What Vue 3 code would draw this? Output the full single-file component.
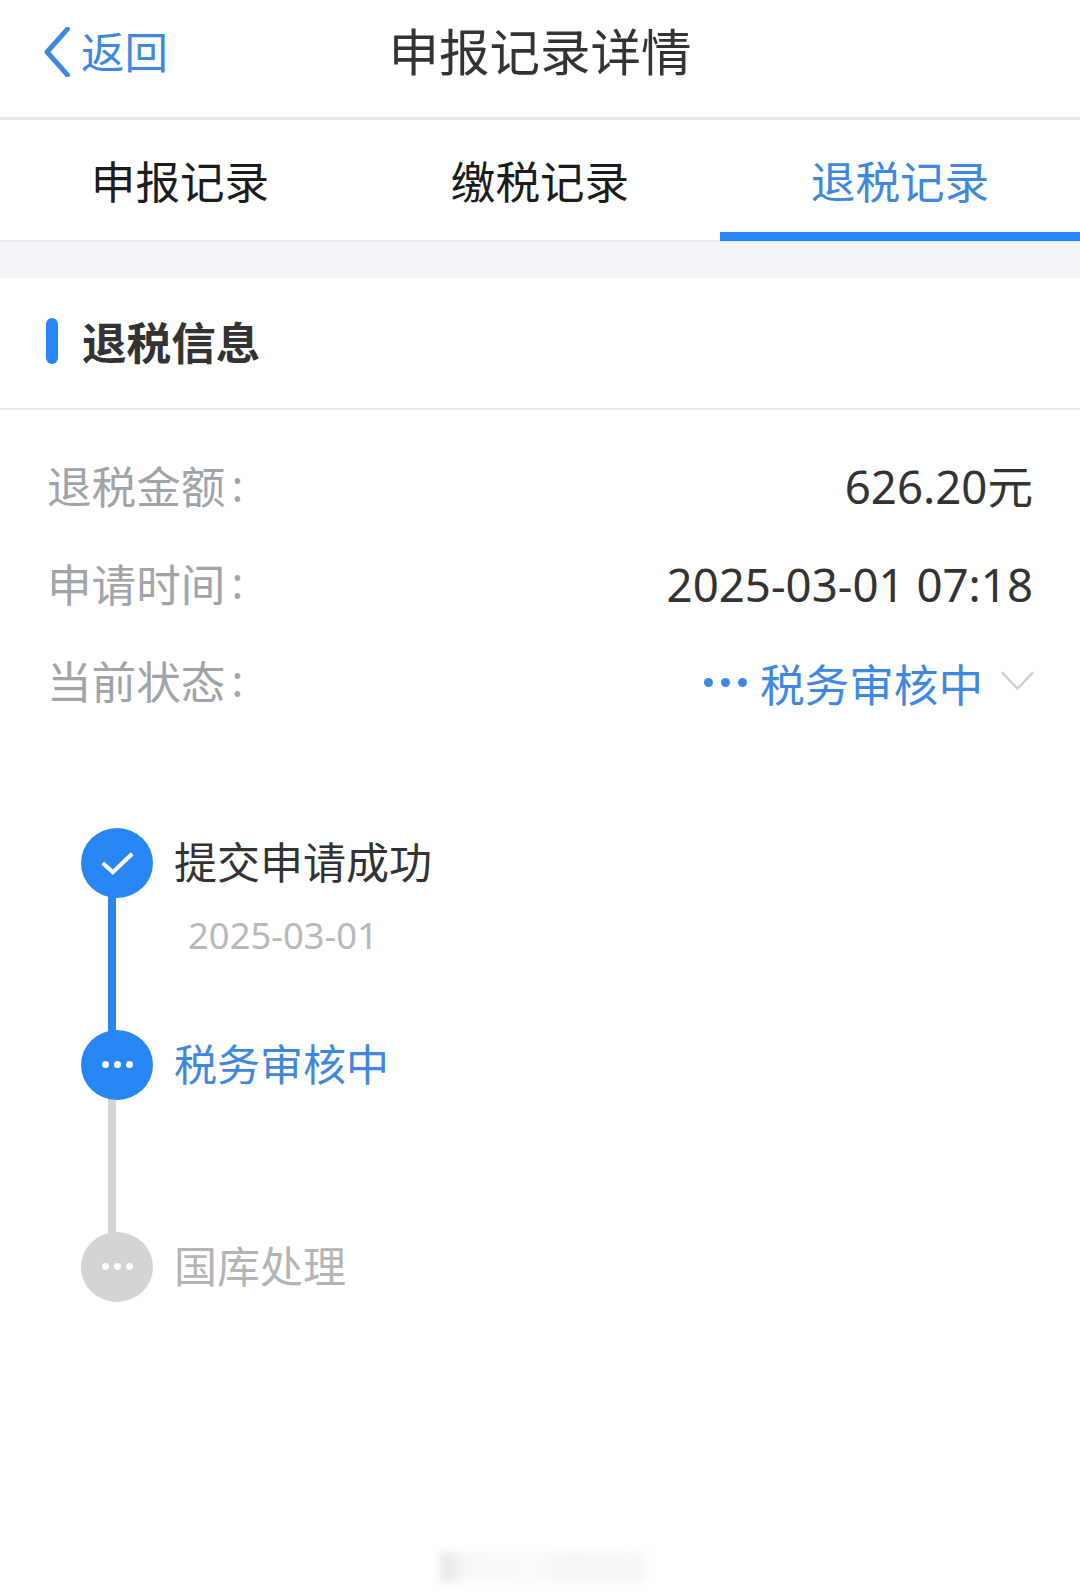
<script setup>
const tabs = [
  { label: '申报记录', active: false },
  { label: '缴税记录', active: false },
  { label: '退税记录', active: true },
]
const rows = [
  { label: '退税金额', value: '626.20元' },
  { label: '申请时间', value: '2025-03-01 07:18' },
]
</script>

<template>
  <div class="page">
    <header class="nav">
      <div class="back">
        <svg class="chevron" viewBox="0 0 26 48" fill="none">
          <path d="M23 2 L3.5 24 L23 46" stroke="#3f88e2" stroke-width="4.8" stroke-linecap="round" stroke-linejoin="round" />
        </svg>
        <span>返回</span>
      </div>
      <h1 class="title">申报记录详情</h1>
    </header>

    <nav class="tabs">
      <div v-for="t in tabs" :key="t.label" class="tab" :class="{ active: t.active }">{{ t.label }}</div>
    </nav>

    <div class="band"></div>

    <section class="section-head">
      <i class="marker"></i>
      <h2>退税信息</h2>
    </section>

    <section class="info">
      <div v-for="r in rows" :key="r.label" class="row">
        <span class="label">{{ r.label }}<span class="colon">:</span></span>
        <span class="value">{{ r.value }}</span>
      </div>
      <div class="row">
        <span class="label">当前状态<span class="colon">:</span></span>
        <span class="status">
          <span class="dots"><b></b><b></b><b></b></span>
          <span class="status-text">税务审核中</span>
          <svg class="caret" viewBox="0 0 36 24" fill="none">
            <path d="M2 3 L18 20 L34 3" stroke="#cfcfcf" stroke-width="2.6" />
          </svg>
        </span>
      </div>
    </section>

    <section class="timeline">
      <div class="step done">
        <div class="node">
          <svg viewBox="0 0 38 28" class="check" fill="none">
            <path d="M3 14 L14 24 L35 4" stroke="#fff" stroke-width="4.4" />
          </svg>
        </div>
        <div class="step-body">
          <div class="step-title">提交申请成功</div>
          <div class="step-date">2025-03-01</div>
        </div>
      </div>
      <div class="step current">
        <div class="node"><span class="node-dots"><b></b><b></b><b></b></span></div>
        <div class="step-body">
          <div class="step-title">税务审核中</div>
        </div>
      </div>
      <div class="step pending">
        <div class="node"><span class="node-dots"><b></b><b></b><b></b></span></div>
        <div class="step-body">
          <div class="step-title">国库处理</div>
        </div>
      </div>
    </section>

    <div class="smudge"></div>
  </div>
</template>

<style>
html, body { margin: 0; background: #fff; }
</style>

<style scoped>
.page {
  position: relative;
  width: 1080px;
  height: 1592px;
  overflow: hidden;
  background: #fff;
  font-family: "Noto Sans", "Noto Sans CJK SC", sans-serif;
  color: #333;
}
.nav {
  position: relative;
  height: 117px;
  border-bottom: 3px solid #e6e6e6;
  display: flex;
  align-items: center;
  justify-content: center;
}
.back {
  position: absolute;
  left: 43px;
  top: 27px;
  display: flex;
  align-items: center;
  gap: 10px;
  color: #3f88e2;
  font-size: 43.5px;
  line-height: 50px;
}
.chevron { width: 28px; height: 50px; }
.title {
  margin: -14px 0 0;
  font-size: 50.5px;
  font-weight: 400;
  line-height: 60px;
  color: #333;
}
.tabs {
  display: flex;
  height: 120px;
  border-bottom: 2px solid #e9e9e9;
}
.tab {
  flex: 1;
  text-align: center;
  font-size: 44.6px;
  line-height: 124px;
  color: #1c1c1c;
  position: relative;
}
.tab.active { color: #3f88e2; }
.tab.active::after {
  content: "";
  position: absolute;
  left: 0;
  right: 0;
  bottom: -1px;
  height: 9px;
  background: #2886f4;
}
.band { height: 36px; background: #f3f5f9; }
.section-head {
  display: flex;
  align-items: center;
  gap: 24px;
  height: 130px;
  padding-left: 46px;
  border-bottom: 2px solid #e9e9e9;
}
.marker {
  width: 12px;
  height: 46px;
  border-radius: 6px;
  background: #2886f4;
  margin-top: -5px;
}
.section-head h2 {
  margin: 0;
  font-size: 44.6px;
  font-weight: 700;
  color: #333;
  line-height: 56px;
}
.info {
  padding: 26px 47px 0 47px;
  display: flex;
  flex-direction: column;
}
.row {
  height: 97.5px;
  display: flex;
  align-items: center;
  justify-content: space-between;
}
.label { font-size: 44.6px; color: #a0a3a8; display: flex; align-items: center; }
.colon { margin-left: 6px; font-size: 44px; line-height: 1; }
.value { font-size: 45.6px; line-height: 60px; color: #333; margin-top: 3px; }
.status { display: flex; align-items: center; margin-top: 5px; margin-right: -2px; }
.dots { display: flex; gap: 8px; margin-right: 13px; }
.dots b { width: 9px; height: 9px; border-radius: 50%; background: #3f88e2; }
.status-text { font-size: 44.6px; color: #3f88e2; }
.caret { width: 35px; height: 24px; margin-left: 17px; margin-top: -2px; }
.timeline {
  position: relative;
  padding: 99px 0 0 81px;
  display: flex;
  flex-direction: column;
}
.step {
  position: relative;
  display: flex;
  align-items: flex-start;
  height: 202px;
}
.step:not(.pending)::after {
  content: "";
  position: absolute;
  left: 27px;
  top: 60px;
  width: 8px;
  height: 150px;
  background: #2886f4;
}
.step.current::after { background: #d4d4d4; }
.node {
  position: relative;
  z-index: 1;
  width: 72px;
  height: 70px;
  border-radius: 50%;
  background: #2886f4;
  display: flex;
  align-items: center;
  justify-content: center;
  flex: none;
}
.pending .node { background: #d4d4d4; }
.check { width: 35px; height: 26px; }
.node-dots { display: flex; gap: 5px; }
.node-dots b { width: 7px; height: 7px; border-radius: 50%; background: #fff; }
.step-body { margin-left: 21px; }
.step-title {
  font-size: 43px;
  line-height: 70px;
  color: #333;
}
.current .step-title { color: #3f88e2; }
.pending .step-title { color: #b4b4b4; }
.step-date {
  margin: 15px 0 0 14px;
  font-size: 36.4px;
  line-height: 44px;
  color: #b8b8b8;
}
.smudge {
  position: absolute;
  left: 440px;
  top: 1552px;
  width: 206px;
  height: 30px;
  background: linear-gradient(90deg, #e0e0e0 0 5%, #f6f6f6 12%, #fafafa 45%, #f3f3f3 60%, #f5f5f5 100%);
  filter: blur(4px);
  opacity: .7;
}
</style>
